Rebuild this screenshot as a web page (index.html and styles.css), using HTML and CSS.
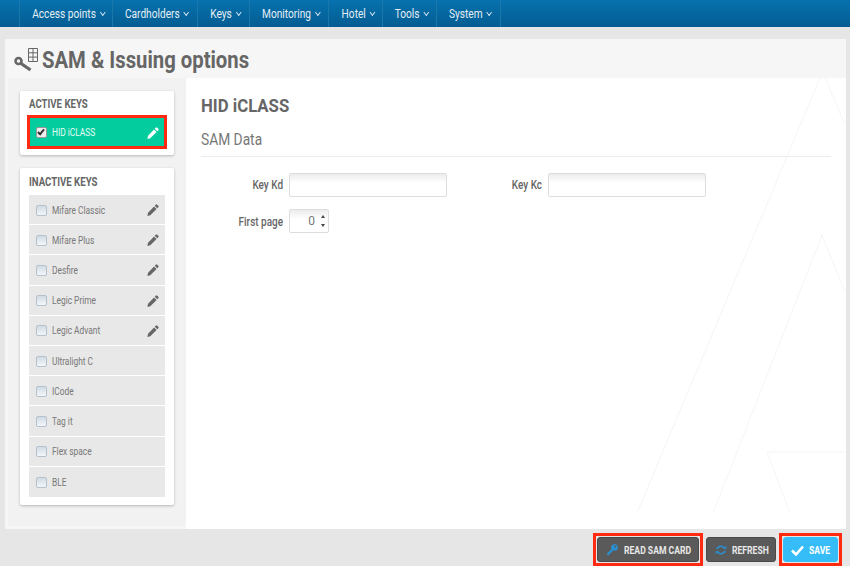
FILE: index.html
```html
<!DOCTYPE html>
<html>
  <head>
    <title>SAM &amp; Issuing options</title>
    <link rel="stylesheet" href="styles.css">
  </head>
  <body>
    <svg width="0" height="0" class="defs">
      <symbol id="pencil" viewBox="0 0 14 14">
        <path d="M10.2.8a1.2 1.2 0 0 1 1.7 0l1.3 1.3a1.2 1.2 0 0 1 0 1.7L12 5 9 2zM8.2 2.8l3 3-7.4 7.4L.4 14l.8-3.800z"/>
      </symbol>
    </svg>
    <nav class="topbar">
      <a class="nav-item"><span class="nav-label">Access points <i class="caret"></i></span></a>
      <a class="nav-item"><span class="nav-label">Cardholders <i class="caret"></i></span></a>
      <a class="nav-item"><span class="nav-label">Keys <i class="caret"></i></span></a>
      <a class="nav-item"><span class="nav-label">Monitoring <i class="caret"></i></span></a>
      <a class="nav-item"><span class="nav-label">Hotel <i class="caret"></i></span></a>
      <a class="nav-item"><span class="nav-label">Tools <i class="caret"></i></span></a>
      <a class="nav-item"><span class="nav-label">System <i class="caret"></i></span></a>
    </nav>

    <div class="panel">
      <header class="page-head">
        <svg class="head-icon" width="26" height="26" viewBox="0 0 26 26">
          <circle cx="4.500" cy="15" r="3" fill="none" stroke="#666" stroke-width="2.600"/>
          <path d="M7 17.500l9.500 6.500" stroke="#666" stroke-width="3.200" fill="none"/>
          <path d="M14.500 2.500h9v13h-9zM14.500 6.800h9M14.500 11.100h9M19 2.500v13" stroke="#666" fill="none"/>
        </svg>
        <h1>SAM &amp; Issuing options</h1>
      </header>

      <div class="columns">
        <aside class="sidebar">
          <section class="card">
            <h3>ACTIVE KEYS</h3>
            <div class="key key-active">
              <input type="checkbox" checked>
              <span class="key-name">HID iCLASS</span>
              <svg class="pencil"><use href="#pencil"/></svg>
            </div>
          </section>
          <section class="card card-list">
            <h3>INACTIVE KEYS</h3>
            <div class="key-list">
              <div class="key"><input type="checkbox"><span class="key-name">Mifare Classic</span><svg class="pencil"><use href="#pencil"/></svg></div>
              <div class="key"><input type="checkbox"><span class="key-name">Mifare Plus</span><svg class="pencil"><use href="#pencil"/></svg></div>
              <div class="key"><input type="checkbox"><span class="key-name">Desfire</span><svg class="pencil"><use href="#pencil"/></svg></div>
              <div class="key"><input type="checkbox"><span class="key-name">Legic Prime</span><svg class="pencil"><use href="#pencil"/></svg></div>
              <div class="key"><input type="checkbox"><span class="key-name">Legic Advant</span><svg class="pencil"><use href="#pencil"/></svg></div>
              <div class="key"><input type="checkbox"><span class="key-name">Ultralight C</span></div>
              <div class="key"><input type="checkbox"><span class="key-name">ICode</span></div>
              <div class="key"><input type="checkbox"><span class="key-name">Tag it</span></div>
              <div class="key"><input type="checkbox"><span class="key-name">Flex space</span></div>
              <div class="key"><input type="checkbox"><span class="key-name">BLE</span></div>
            </div>
          </section>
        </aside>

        <main class="content">
          <svg class="backdrop" width="660" height="451" viewBox="0 0 660 451">
            <path d="M451 435L634 0M639 0L659 47M527 435L636 157L659 214M604 435L581 374H660" fill="none" stroke="#f5f5f5"/>
          </svg>
          <h2>HID iCLASS</h2>
          <h4><span class="h4-text">SAM Data</span></h4>
          <div class="form">
            <div class="form-row">
              <label class="label-left">Key Kd</label>
              <input class="field" type="text">
              <label class="label-right">Key Kc</label>
              <input class="field" type="text">
            </div>
            <div class="form-row">
              <label class="label-left label-low">First page</label>
              <div class="spinner">
                <span>0</span>
                <span class="arrows"><i class="up"></i><i class="down"></i></span>
              </div>
            </div>
          </div>
        </main>
      </div>
    </div>

    <footer class="actions">
      <div class="hl">
        <button class="btn btn-read">
          <svg width="12" height="12" viewBox="0 0 12 12"><circle cx="8.500" cy="3.500" r="3.300" fill="#2a8fd0"/><path d="M6.500 5.500L1.500 10.800" stroke="#2a8fd0" stroke-width="2.400" fill="none"/><circle cx="9.300" cy="2.700" r="0.900" fill="#5a5a5a"/></svg>
          <span class="btn-text">READ SAM CARD</span>
        </button>
      </div>
      <button class="btn btn-refresh">
        <svg width="12" height="10" viewBox="0 0 14 12"><path d="M2 5a5 4.500 0 0 1 9-1.500M12 7a5 4.500 0 0 1-9 1.500" fill="none" stroke="#2a8fd0" stroke-width="2"/><path d="M9 4.500h4.500V1zM5 7.500H.5V11z" fill="#2a8fd0"/></svg>
        <span class="btn-text">REFRESH</span>
      </button>
      <div class="hl">
        <button class="btn btn-save">
          <svg width="13" height="11" viewBox="0 0 13 11"><path d="M1 5.500l4 4 7-8" fill="none" stroke="#fff" stroke-width="2.600"/></svg>
          <span class="btn-text">SAVE</span>
        </button>
      </div>
    </footer>
  </body>
</html>
```

FILE: styles.css
```css
html, body {
  margin: 0;
  padding: 0;
}
body {
  width: 850px;
  height: 566px;
  overflow: hidden;
  background: #e6e6e6;
  font-family: Roboto, "Liberation Sans", Arial, sans-serif;
  color: #666;
  display: flex;
  flex-direction: column;
}
.defs {
  position: absolute;
}

/* top navigation */
.topbar {
  height: 27px;
  flex: none;
  display: flex;
  padding-left: 19px;
  background: linear-gradient(#0672ae, #045c92);
  box-sizing: border-box;
}
.nav-item {
  display: flex;
  align-items: center;
  justify-content: center;
  padding: 0 0 1px 4px;
  border-right: 1px solid #1a77aa;
  box-sizing: border-box;
  color: #e4eef5;
  font-size: 13px;
  height: 27px;
  white-space: nowrap;
}
.nav-label {
  display: flex;
  align-items: center;
  gap: 6px;
  transform: scaleX(0.78);
  flex: none;
}
.nav-item:nth-child(1) { width: 94px; border-left: 1px solid #1a77aa; }
.nav-item:nth-child(2) { width: 85px; }
.nav-item:nth-child(3) { width: 52px; }
.nav-item:nth-child(4) { width: 79px; }
.nav-item:nth-child(5) { width: 54px; }
.nav-item:nth-child(6) { width: 54px; }
.nav-item:nth-child(7) { width: 64px; }
.caret {
  width: 5px;
  height: 5px;
  margin-top: -2px;
  border-right: 1.500px solid #e4eef5;
  border-bottom: 1.500px solid #e4eef5;
  transform: rotate(45deg);
  box-sizing: border-box;
}

/* main panel */
.panel {
  margin: 12px 4px 0 5px;
  height: 490px;
  background: #f6f6f6;
  display: flex;
  flex-direction: column;
}
.page-head {
  height: 39px;
  flex: none;
  display: flex;
  align-items: center;
  padding-left: 9px;
  box-sizing: border-box;
}
h1 {
  margin: 3px 0 0 2px;
  font-size: 24px;
  font-weight: 700;
  color: #666;
  white-space: nowrap;
  transform: scaleX(0.845);
  transform-origin: left;
}
.columns {
  flex: 1;
  display: flex;
  min-height: 0;
}
.sidebar {
  width: 178px;
  margin: 0 0 3px 3px;
  padding: 13px 12px 0 12px;
  box-sizing: border-box;
  background: #f2f2f2;
  display: flex;
  flex-direction: column;
  gap: 13px;
}
.card {
  background: #fff;
  border-radius: 2px;
  box-shadow: 0 1px 3px rgba(0, 0, 0, 0.25);
  padding: 6px 9px 8px;
}
.card h3 {
  margin: 0 0 7px;
  height: 13px;
  line-height: 13px;
  font-size: 12.500px;
  font-weight: 700;
  color: #666;
  white-space: nowrap;
  transform: scaleX(0.77);
  transform-origin: left;
}
.card-list {
  padding-top: 7px;
}
.key {
  height: 30.200px;
  display: flex;
  align-items: center;
  background: #e8e8e8;
  border-bottom: 1px solid #fff;
  box-sizing: border-box;
  padding: 1px 6px 0 7px;
  font-size: 11px;
  color: #777;
}
.key:last-child {
  border-bottom: 0;
}
.key input {
  appearance: none;
  width: 9px;
  height: 9px;
  margin: 0 5px 0 0;
  background: linear-gradient(#d0dbe4, #f4f7fa);
  border: 1px solid #b5c2cd;
  border-radius: 2px;
  box-sizing: content-box;
  flex: none;
}
.key-name {
  flex: 1;
  white-space: nowrap;
  transform: scaleX(0.76);
  transform-origin: left;
}
.key-active {
  background: #03cd9f;
  color: #e8fbf5;
  outline: 3px solid #ff2a10;
  outline-offset: -1px;
  height: 30px;
  border-bottom: 0;
}
.key-active input {
  background: #eee;
  border-color: #999;
  position: relative;
}
.key-active input::after {
  content: "";
  position: absolute;
  left: 2px;
  top: 0;
  width: 4px;
  height: 7px;
  border-right: 2px solid #333;
  border-bottom: 2px solid #333;
  transform: rotate(40deg);
  box-sizing: border-box;
}
.pencil {
  width: 12px;
  height: 12px;
  fill: #666;
}
.key-active .pencil {
  fill: #fff;
}

/* right side */
.content {
  flex: 1;
  position: relative;
  background: #fff;
  padding: 17px 15px 0 15px;
}
.backdrop {
  position: absolute;
  left: 0;
  top: 0;
}
h2 {
  margin: 0;
  font-size: 18px;
  line-height: 22px;
  font-weight: 700;
  color: #666;
  position: relative;
  transform: scaleX(0.93);
  transform-origin: left;
}
h4 {
  margin: 12px 0 0;
  height: 27px;
  line-height: 20px;
  font-size: 17px;
  font-weight: 400;
  color: #777;
  border-bottom: 1px solid #ececec;
  position: relative;
}
.h4-text {
  display: inline-block;
  transform: scaleX(0.81);
  transform-origin: left;
}
.form {
  position: relative;
  padding-top: 16px;
  display: flex;
  flex-direction: column;
  gap: 12px;
  margin-left: -1px;
}
.form-row {
  display: flex;
  align-items: center;
  font-size: 12px;
  font-weight: 500;
  color: #666;
}
.form-row label {
  transform: scaleX(0.83);
  transform-origin: right;
  white-space: nowrap;
}
.label-left {
  width: 83px;
  margin-right: 6px;
  text-align: right;
}
.label-low {
  padding-top: 1px;
}
.label-right {
  width: 95px;
  margin-right: 6px;
  text-align: right;
}
.field {
  width: 158px;
  height: 24px;
  padding: 0;
  box-sizing: border-box;
  border: 1px solid #ddd;
  border-radius: 2px;
  background: linear-gradient(#ececec, #fff 9px);
}
.spinner {
  width: 40px;
  height: 24px;
  box-sizing: border-box;
  border: 1px solid #ddd;
  border-radius: 2px;
  background: linear-gradient(#ececec, #fff 9px);
  display: flex;
  align-items: center;
  justify-content: flex-end;
  gap: 6px;
  padding-right: 3px;
  font-weight: 400;
  font-size: 12px;
  color: #777;
}
.arrows {
  display: flex;
  flex-direction: column;
  gap: 6px;
}
.up, .down {
  display: block;
  border-left: 2px solid transparent;
  border-right: 2px solid transparent;
}
.up {
  border-bottom: 3px solid #444;
}
.down {
  border-top: 3px solid #444;
}

/* footer buttons */
.actions {
  flex: 1;
  display: flex;
  justify-content: flex-end;
  align-items: center;
  gap: 3px;
  padding: 4px 8px 0 0;
}
.hl {
  border: 3px solid #ff2a10;
  padding: 1px;
  display: flex;
}
.btn {
  height: 25px;
  border: 1px solid #4a4a4a;
  border-radius: 3px;
  background: #5a5a5a;
  color: #e8e8e8;
  font-family: inherit;
  font-size: 10px;
  font-weight: 700;
  display: flex;
  align-items: center;
  gap: 5px;
  padding: 1px 0 0 8px;
  box-sizing: border-box;
  white-space: nowrap;
}
.btn svg {
  flex: none;
}
.btn-text {
  transform: scaleX(0.86);
  transform-origin: left;
}
.btn-read {
  width: 102px;
  gap: 6px;
}
.btn-refresh {
  width: 70px;
}
.btn-save {
  width: 55px;
  padding-left: 7px;
  background: #36bdf7;
  border-color: #36bdf7;
  color: #fff;
}
```
